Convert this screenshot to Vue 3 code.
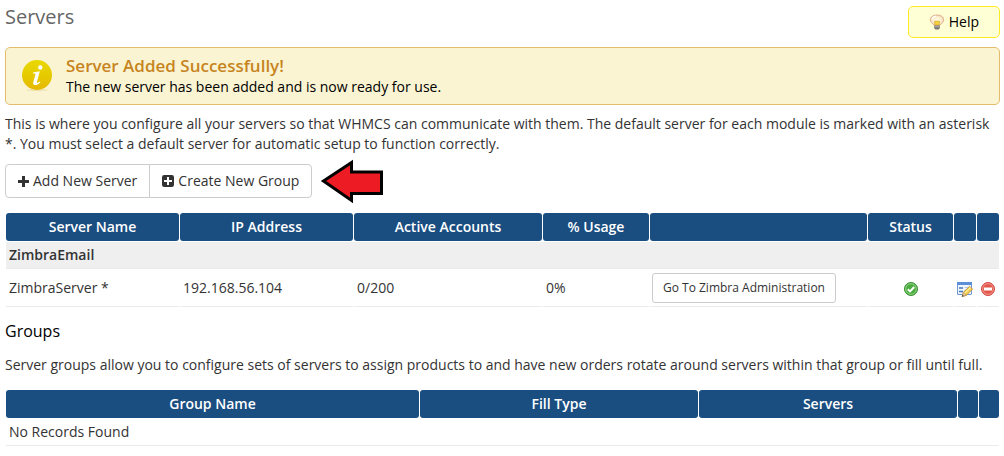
<script setup>
const serverColumns = [
  { label: 'Server Name', width: 173 },
  { label: 'IP Address', width: 173 },
  { label: 'Active Accounts', width: 188 },
  { label: '% Usage', width: 106 },
  { label: '', width: 217 },
  { label: 'Status', width: 85 },
  { label: '', width: 22 },
  { label: '', width: 22 },
]

const groupColumns = [
  { label: 'Group Name', width: 413 },
  { label: 'Fill Type', width: 278 },
  { label: 'Servers', width: 258 },
  { label: '', width: 20 },
  { label: '', width: 20 },
]

const servers = [
  { name: 'ZimbraServer', isDefault: true, ip: '192.168.56.104', accounts: '0/200', usage: '0%' },
]
</script>

<template>
  <main class="page">
    <header class="top">
      <h1>Servers</h1>
      <button type="button" class="help">
        <svg class="bulb" width="16" height="16" viewBox="0 0 16 16" aria-hidden="true">
          <defs>
            <radialGradient id="bulb-glass" cx="0.5" cy="0.5" r="0.55">
              <stop offset="0" stop-color="#fff9dc" />
              <stop offset="0.6" stop-color="#fbefcf" />
              <stop offset="1" stop-color="#ecc8a6" />
            </radialGradient>
          </defs>
          <path d="M8 1C4 1 1.300 3 1.300 5.800C1.300 8.300 3.600 9.200 5 11.200H11C12.400 9.200 14.700 8.300 14.700 5.800C14.700 3 12 1 8 1Z" fill="url(#bulb-glass)" stroke="#dcab88" stroke-width="0.900" />
          <path d="M3 5.500C3.300 3.500 5 2.400 7 2.200" fill="none" stroke="#fff" stroke-width="1.200" />
          <path d="M5.500 7.300H10.500L10 11H6Z" fill="#f5d53e" stroke="#d8a827" stroke-width="0.700" />
          <path d="M5 11.600H11V14L9.500 15.500H6.500L5 14Z" fill="#77746f" />
          <path d="M5 12.900H11" stroke="#c9c8c5" stroke-width="0.800" />
        </svg>
        <span>Help</span>
      </button>
    </header>

    <section class="notice" role="status">
      <svg width="34" height="34" viewBox="0 0 34 34" aria-hidden="true">
        <defs>
          <linearGradient id="info-fill" x1="0" y1="0" x2="0" y2="1">
            <stop offset="0" stop-color="#ead800" />
            <stop offset="0.5" stop-color="#e5cb00" />
            <stop offset="1" stop-color="#e6b800" />
          </linearGradient>
        </defs>
        <ellipse cx="17" cy="31" rx="11" ry="1.200" fill="#efe3b0" />
        <circle cx="17" cy="16" r="15" fill="url(#info-fill)" />
        <circle cx="20.300" cy="8.500" r="2.200" fill="#fff" />
        <path d="M13 13.500L19.800 12.300L16.900 23C16.600 24.300 17.600 24.200 19.800 22.600L20.400 23.500C17.500 26.500 12.300 27.400 13.200 23.600L15.400 15.600C15.700 14.400 14.600 14.500 12.800 14.600Z" fill="#fff" />
      </svg>
      <div>
        <h2>Server Added Successfully!</h2>
        <p>The new server has been added and is now ready for use.</p>
      </div>
    </section>

    <p class="intro">
      This is where you configure all your servers so that WHMCS can communicate with them. The
      default server for each module is marked with an asterisk *. You must select a default server
      for automatic setup to function correctly.
    </p>

    <div class="actions">
      <div class="button-group">
        <button type="button">
          <svg width="11" height="11" viewBox="0 0 11 11" aria-hidden="true">
            <path d="M4 0H7V4H11V7H7V11H4V7H0V4H4Z" fill="#333" />
          </svg>
          Add New Server
        </button>
        <button type="button">
          <svg width="12" height="12" viewBox="0 0 12 12" aria-hidden="true">
            <rect width="12" height="12" rx="2.200" fill="#333" />
            <path d="M5 2H7V5H10V7H7V10H5V7H2V5H5Z" fill="#fff" />
          </svg>
          Create New Group
        </button>
      </div>
      <svg class="arrow" width="63" height="46" viewBox="0 0 63 46" aria-hidden="true">
        <path d="M3.500 23L31.500 4.500V14H61.500V35.500H31.500V42.500L3.500 23Z" fill="#ed1c24" stroke="#000" stroke-width="3" />
      </svg>
    </div>

    <table>
      <colgroup>
        <col v-for="(c, i) in serverColumns" :key="i" :style="{ width: c.width + 'px' }" />
      </colgroup>
      <thead>
        <tr>
          <th v-for="(c, i) in serverColumns" :key="i" scope="col">{{ c.label }}</th>
        </tr>
      </thead>
      <tbody>
        <tr class="module">
          <td :colspan="serverColumns.length">ZimbraEmail</td>
        </tr>
        <tr v-for="s in servers" :key="s.name">
          <td>{{ s.name }}{{ s.isDefault ? ' *' : '' }}</td>
          <td>{{ s.ip }}</td>
          <td>{{ s.accounts }}</td>
          <td>{{ s.usage }}</td>
          <td class="admin"><button type="button">Go To Zimbra Administration</button></td>
          <td class="icon">
            <svg width="16" height="16" viewBox="0 0 16 16" role="img" aria-label="Enabled">
              <circle cx="8" cy="8" r="6.500" fill="#4bad3f" stroke="#398f35" />
              <circle cx="8" cy="8" r="5.300" fill="none" stroke="#9bd68c" stroke-width="0.900" />
              <path d="M4.800 8.200L7.100 10.400L11.200 6" fill="none" stroke="#fff" stroke-width="2" />
            </svg>
          </td>
          <td class="icon">
            <a href="#" aria-label="Edit">
              <svg width="16" height="16" viewBox="0 0 16 16" aria-hidden="true">
                <rect x="0.500" y="1.500" width="14" height="12" rx="0.500" fill="#f1f6fc" stroke="#6b98d2" />
                <rect x="0" y="1" width="15" height="3" fill="#5c8fd6" />
                <path d="M2 7H6M2 10.500H6" stroke="#4477bd" stroke-width="1.300" />
                <path d="M7.500 6.500H13M7.500 9.500H10" stroke="#b3cbe8" />
                <path d="M5.300 15.300L6.300 11.500L12.500 5.300L15.600 8.100L9.200 14.400Z" fill="#f6cf50" stroke="#b88632" stroke-width="0.800" />
                <path d="M7.500 12.300L13.500 6.500" stroke="#fff0a1" stroke-width="1.100" />
                <path d="M5.300 15.300L6.300 11.500L9.200 14.400Z" fill="#f5dfbd" stroke="#a17336" stroke-width="0.600" />
                <path d="M4.700 15.800L5.500 13.700L7 15.100Z" fill="#4c4638" />
              </svg>
            </a>
          </td>
          <td class="icon">
            <a href="#" aria-label="Delete">
              <svg width="16" height="16" viewBox="0 0 16 16" aria-hidden="true">
                <circle cx="8" cy="8" r="6.500" fill="#e3574c" stroke="#d0493f" />
                <circle cx="8" cy="8" r="5.400" fill="none" stroke="#f3a098" stroke-width="0.900" />
                <rect x="4" y="6.500" width="8" height="3" fill="#fff" />
              </svg>
            </a>
          </td>
        </tr>
      </tbody>
    </table>

    <h2 class="groups-title">Groups</h2>
    <p class="groups-intro">
      Server groups allow you to configure sets of servers to assign products to and have new orders
      rotate around servers within that group or fill until full.
    </p>

    <table>
      <colgroup>
        <col v-for="(c, i) in groupColumns" :key="i" :style="{ width: c.width + 'px' }" />
      </colgroup>
      <thead>
        <tr>
          <th v-for="(c, i) in groupColumns" :key="i" scope="col">{{ c.label }}</th>
        </tr>
      </thead>
      <tbody>
        <tr>
          <td :colspan="groupColumns.length">No Records Found</td>
        </tr>
      </tbody>
    </table>
  </main>
</template>

<style>
body {
  margin: 0;
  background: #fff;
}
</style>

<style scoped>
.page {
  padding: 6px 4px 8px 5px;
  font-family: "Open Sans", "Noto Sans", sans-serif;
  font-size: 14px;
  line-height: 20px;
  color: #333;
}

h1,
h2,
p {
  margin: 0;
}

button {
  font: inherit;
  color: #333;
  background: #fff;
  cursor: pointer;
}

svg {
  display: block;
}

.top {
  display: flex;
  justify-content: space-between;
  align-items: flex-start;
}

h1 {
  font-size: 20px;
  font-weight: 400;
  line-height: 22px;
  color: #666;
}

.help {
  display: flex;
  align-items: center;
  gap: 4px;
  padding: 5px 20px;
  border: 1px solid #ffe926;
  border-radius: 5px;
  background: #ffffd6;
  color: #000;
}

.notice {
  display: flex;
  align-items: flex-start;
  gap: 12px;
  margin-top: 9px;
  padding: 8px 14px 7px;
  border: 1px solid #e3bd6c;
  border-radius: 5px;
  background: #faf4d3;
  color: #000;
}

.notice svg {
  margin-top: 3px;
}

.notice h2 {
  font-size: 17px;
  font-weight: 600;
  line-height: 20px;
  color: #c7841e;
}

.notice p {
  margin-top: 1px;
}

.intro {
  margin-top: 9px;
}

.actions {
  display: flex;
  align-items: center;
  gap: 8px;
  height: 46px;
  margin-top: 4px;
}

.button-group {
  display: flex;
}

.button-group button {
  display: flex;
  align-items: center;
  gap: 4px;
  padding: 6px 12px;
  border: 1px solid #ccc;
  border-radius: 4px 0 0 4px;
}

.button-group button + button {
  margin-left: -1px;
  border-radius: 0 4px 4px 0;
}

table {
  width: 100%;
  table-layout: fixed;
  border-collapse: separate;
  border-spacing: 1px;
}

.actions + table {
  margin-top: 8px;
}

th {
  height: 20px;
  padding: 4px;
  border-radius: 3px;
  background: #1a4d80;
  color: #fff;
  font-weight: 600;
}

td {
  padding: 3px;
  border-bottom: 1px solid #ebebeb;
}

.module td {
  background: #efefef;
  font-weight: 600;
}

.admin {
  padding: 3px 2px;
}

.admin button {
  display: block;
  padding: 4px 10px;
  border: 1px solid #ccc;
  border-radius: 3px;
  font-size: 12px;
}

.icon {
  padding-top: 5px;
}

.icon svg {
  margin: 0 auto;
}

.groups-title {
  margin-top: 13px;
  font-size: 16px;
  font-weight: 400;
  line-height: 20px;
  color: #000;
}

.groups-intro {
  margin: 14px 0;
}
</style>
